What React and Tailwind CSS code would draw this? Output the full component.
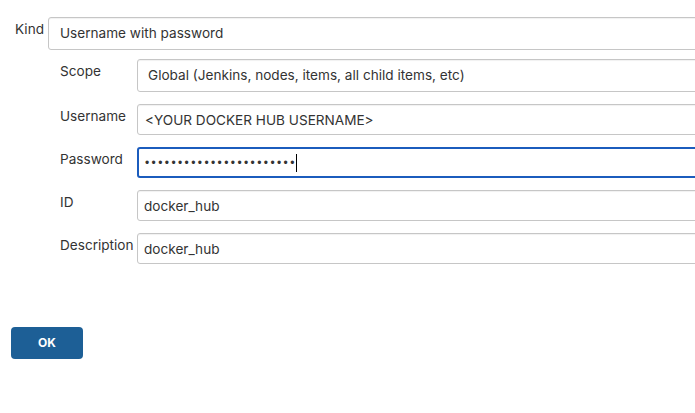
import React from "react";

const inputCls =
  "h-full w-full border border-[#c6c6c6] rounded-[3px] bg-white outline-none text-[13.6px] text-[#333] shadow-[inset_0_1px_1px_rgba(0,0,0,0.06)] font-['Inter',Arial,sans-serif]";

function Row({ label, children, h = "h-[31px]" }) {
  return (
    <div className="flex items-start">
      <div className="w-[77px] shrink-0 pt-[2px] leading-5 text-[13.6px] text-[#333]">{label}</div>
      <div className={`${h} w-[600px] shrink-0`}>{children}</div>
    </div>
  );
}

export default function App() {
  return (
    <div className="w-[695px] h-[413px] overflow-hidden bg-white font-['Inter',Arial,sans-serif] text-[#333]">
      <div className="pt-[17px] pl-[15px]">
        <div className="flex items-start">
          <div className="w-[33px] shrink-0 pt-[2px] leading-5 text-[13.6px]">Kind</div>
          <div className="h-[33px] w-[700px] shrink-0">
            <div className={`${inputCls} flex items-center pl-[11px]`}>Username with password</div>
          </div>
        </div>
        <div className="pl-[45px] mt-[9px] flex flex-col gap-[12px]">
          <Row label="Scope" h="h-[33px]">
            <div className={`${inputCls} flex items-center pl-[10px]`}>
              Global (Jenkins, nodes, items, all child items, etc)
            </div>
          </Row>
          <Row label="Username">
            <input readOnly className={`${inputCls} px-[7px]`} value="<YOUR DOCKER HUB USERNAME>" />
          </Row>
          <Row label="Password">
            <div className="h-full w-full border-2 border-[#1b5cbd] rounded-[3px] bg-white flex items-center pl-[6px]">
              <span className="text-[12px] tracking-[2.4px] text-[#333] leading-none font-['Liberation_Sans']">
                {"•".repeat(23)}
              </span>
              <span className="w-px h-[18px] bg-black -ml-[1px]" />
            </div>
          </Row>
          <Row label="ID">
            <input readOnly className={`${inputCls} px-[6px]`} value="docker_hub" />
          </Row>
          <Row label="Description">
            <input readOnly className={`${inputCls} px-[6px]`} value="docker_hub" />
          </Row>
        </div>
      </div>
      <div className="pl-[11px] mt-[63px]">
        <button className="w-[72px] h-[32px] rounded-[4px] bg-[#1d5f96] text-white text-[12px] font-bold">
          OK
        </button>
      </div>
    </div>
  );
}
